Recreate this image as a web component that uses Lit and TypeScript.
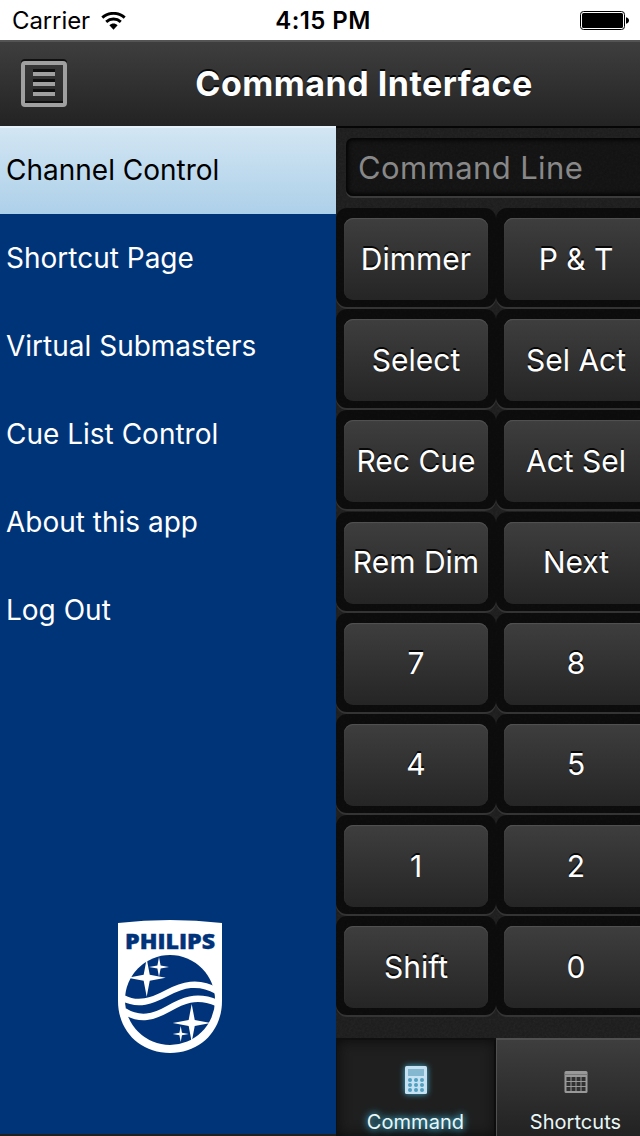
import { LitElement, html, svg, css } from 'lit';
import { customElement, property } from 'lit/decorators.js';
import { classMap } from 'lit/directives/class-map.js';

@customElement('status-bar')
export class StatusBar extends LitElement {
  static styles = css`
    :host {
      display: grid;
      grid-template-columns: 1fr auto 1fr;
      align-items: center;
      height: 40px;
      padding: 1px 11px 0 12px;
      box-sizing: border-box;
      background: #fff;
      color: #000;
      font-size: 24px;
    }

    .carrier {
      display: flex;
      align-items: center;
      gap: 11px;
      letter-spacing: -0.1px;
    }

    .time {
      padding-left: 5px;
      font-weight: 600;
      letter-spacing: 0.4px;
    }

    .battery {
      justify-self: end;
    }

    svg {
      display: block;
    }
  `;

  render() {
    return html`
      <div class="carrier">
        <span>Carrier</span>
        <svg width="25" height="18" viewBox="0 0 25 18">
          <g fill="none" stroke="#000" stroke-width="2.9">
            <path d="M1.3 5.6C7.6 -.1 17.4 -.1 23.7 5.6" />
            <path d="M5.2 9.9C9.5 6.1 15.5 6.1 19.8 9.9" />
          </g>
          <path d="M8.4 13.2C10.8 10.9 14.2 10.9 16.6 13.2L12.5 17.7Z" />
        </svg>
      </div>
      <span class="time">4:15 PM</span>
      <svg class="battery" width="49" height="19" viewBox="0 0 49 19">
        <rect x=".5" y=".5" width="44" height="18" rx="3" fill="none" stroke="#000" />
        <rect x="2" y="2" width="41" height="15" rx="1.5" />
        <path d="M46 6.2C48 6.8 49 8 49 9.5S48 12.2 46 12.8Z" />
      </svg>
    `;
  }
}

@customElement('title-bar')
export class TitleBar extends LitElement {
  static styles = css`
    :host {
      display: flex;
      align-items: center;
      height: 86px;
      padding: 0 21px 2px;
      box-sizing: border-box;
      background: linear-gradient(#3e3e3e, #232323);
      border-top: 2px solid #545454;
    }

    .menu {
      display: block;
      flex: none;
    }

    .title {
      flex: 1;
      margin: 2px 0 0 42px;
      text-align: center;
      color: #fff;
      font-size: 34px;
      font-weight: 700;
      letter-spacing: 0.5px;
      line-height: 40px;
      white-space: nowrap;
      text-shadow: 0 -2px 0 #080808;
    }
  `;

  @property() title = '';

  render() {
    return html`
      <svg class="menu" width="46" height="48" viewBox="0 0 46 48">
        <g fill="none" stroke-width="4">
          <rect x="2" y="2" width="42" height="42" rx="2" stroke="#101010" />
          <rect x="2" y="4" width="42" height="42" rx="2" stroke="#a0a0a0" />
        </g>
        <path d="M12 12H34M12 22H34M12 32H34" stroke="#101010" stroke-width="4" />
        <path d="M12 15H34M12 25H34M12 35H34" stroke="#a0a0a0" stroke-width="4" />
        <path d="M4 43H42" stroke="#101010" stroke-width="2" />
      </svg>
      <h1 class="title">${this.title}</h1>
    `;
  }
}

@customElement('side-menu')
export class SideMenu extends LitElement {
  static styles = css`
    :host {
      display: flex;
      flex-direction: column;
      background: #003478;
      color: #fff;
      font-size: 28px;
      border-bottom: 2px solid #202020;
    }

    .item {
      display: flex;
      align-items: center;
      height: 88px;
      padding: 0 6px;
      box-sizing: border-box;
    }

    .selected {
      color: #000;
      background: linear-gradient(#d3e6f3, #add0e9);
      box-shadow: inset 0 2px 0 #e5f1fa;
    }

    .logo {
      align-self: center;
      margin: auto 0 79px 4px;
    }

    .brand {
      font: 800 21px 'Open Sans', sans-serif;
      letter-spacing: 0;
    }
  `;

  @property({ type: Array }) items: string[] = [];
  @property({ type: Number }) selected = 0;

  render() {
    return html`
      ${this.items.map(
        (item, i) => html`
          <div class=${classMap({ item: true, selected: i === this.selected })}>
            ${item}
          </div>
        `
      )}
      ${this._renderLogo()}
    `;
  }

  _renderLogo() {
    return html`
      <svg class="logo" width="108" height="136" viewBox="0 0 108 136">
        <path
          fill="#fff"
          d="M2 4Q54 -2 106 4V82C106 112 84 134 54 134S2 112 2 82Z"
        />
        <text
          class="brand"
          x="54"
          y="30"
          text-anchor="middle"
          textLength="90"
          lengthAdjust="spacingAndGlyphs"
          fill="#00337a"
          stroke="#00337a"
          stroke-width=".4"
        >PHILIPS</text>
        <circle cx="54" cy="81" r="45" fill="#00337a" />
        <g fill="none" stroke="#fff" stroke-width="6.5">
          <path d="M7 79C22 87 36 82 51 74S82 61 101 72" />
          <path d="M8 92C24 102 38 98 52 90S80 75 101 84" />
        </g>
        <g fill="#fff">
          ${this._star(30.7, 58.7, 19)} ${this._star(43, 48, 10)}
          ${this._star(75.7, 104, 19)} ${this._star(64.7, 115, 8)}
        </g>
      </svg>
    `;
  }

  // four-pointed star with concave sides
  _star(x: number, y: number, r: number) {
    const k = r * 0.16;
    return svg`<path d="M${x} ${y - r}L${x + k} ${y - k}L${x + r} ${y}L${x + k} ${y + k}L${x} ${y + r}L${x - k} ${y + k}L${x - r} ${y}L${x - k} ${y - k}Z" />`;
  }
}

@customElement('key-pad')
export class KeyPad extends LitElement {
  static styles = css`
    :host {
      display: grid;
      grid-template-columns: 160px 160px;
      grid-auto-rows: 101.2px;
    }

    .well {
      display: flex;
      height: 99px;
      padding: 10px 8px 7px;
      box-sizing: border-box;
      border-radius: 11px;
      background: rgba(0, 0, 0, 0.6);
      box-shadow: 0 2px 0 #343434;
    }

    .key {
      flex: 1;
      display: flex;
      align-items: center;
      justify-content: center;
      padding: 0 0 1px;
      border-radius: 9px;
      background: linear-gradient(#3e3e3e, #252525);
      box-shadow: inset 0 1px 1px #535353;
      color: #fff;
      font-size: 30px;
      letter-spacing: 0;
      white-space: nowrap;
      text-shadow: 0 -2px 0 #080808;
    }
  `;

  @property({ type: Array }) keys: string[] = [];

  render() {
    return this.keys.map(
      key => html`<div class="well"><div class="key">${key}</div></div>`
    );
  }
}

@customElement('tab-bar')
export class TabBar extends LitElement {
  static styles = css`
    :host {
      display: grid;
      grid-template-columns: 160px 160px;
      height: 98px;
    }

    .tab {
      display: flex;
      flex-direction: column;
      align-items: center;
      justify-content: space-between;
      padding: 25px 2px 2px 0;
      box-sizing: border-box;
      background: linear-gradient(#3e3e3e, #222);
      border-top: 2px solid #505050;
      border-left: 1px solid #505050;
      color: #e9f7f7;
      font-size: 20px;
      line-height: 24px;
      letter-spacing: 0.05px;
    }

    .active {
      background: #1f1f1f;
      border-color: #101010;
      box-shadow: inset 0 0 14px #0b0b0b, inset -2px 0 0 #111;
      text-shadow: 0 0 6px #42b4d8, 0 0 10px #2e90b0;
    }

    .active svg {
      filter: drop-shadow(0 0 3px #3fb0d5);
    }

    svg {
      display: block;
    }
  `;

  render() {
    return html`
      <div class="tab active">
        <svg width="24" height="30" viewBox="0 0 24 30">
          <rect x="1" y="1" width="22" height="28" rx="1.5" fill="#c5e1f2" />
          <rect x="4" y="4" width="16" height="7" fill="#83b8d0" />
          ${[15, 20, 25].map(y =>
            [6, 12, 18].map(
              x => svg`<circle cx=${x} cy=${y} r="2" fill="#529fc0" />`
            )
          )}
        </svg>
        <span>Command</span>
      </div>
      <div class="tab">
        <svg width="24" height="30" viewBox="0 0 24 30">
          <path
            fill="#999"
            d="M2 6H22Q23.5 6 23.5 7.5V26.5Q23.5 28 22 28H2Q.5 28 .5 26.5V7.5Q.5 6 2 6Z"
          />
          <path d="M.5 9.5H23.5" stroke="#777" />
          ${[12, 17, 22].map(y =>
            [2.5, 7.5, 12.5, 17.5].map(
              x => svg`<rect x=${x} y=${y} width="4" height="4" fill="#303030" />`
            )
          )}
        </svg>
        <span>Shortcuts</span>
      </div>
    `;
  }
}

@customElement('app-root')
export class AppRoot extends LitElement {
  static styles = css`
    :host {
      display: flex;
      flex-direction: column;
      width: 640px;
      height: 1136px;
      overflow: hidden;
      font-family: Inter, 'Liberation Sans', sans-serif;
    }

    .main {
      flex: 1;
      display: grid;
      grid-template-columns: 336px 304px;
      min-height: 0;
    }

    .panel {
      display: flex;
      flex-direction: column;
      overflow: hidden;
      box-sizing: border-box;
      border-top: 2px solid #060606;
      background: #1b1b1c
        url("data:image/svg+xml,%3Csvg xmlns='http://www.w3.org/2000/svg' width='120' height='120'%3E%3Cfilter id='n'%3E%3CfeTurbulence type='fractalNoise' baseFrequency='.45' numOctaves='2' stitchTiles='stitch'/%3E%3CfeColorMatrix type='saturate' values='0'/%3E%3C/filter%3E%3Crect width='120' height='120' filter='url(%23n)' opacity='.06'/%3E%3C/svg%3E");
    }

    .command-line {
      flex: none;
      display: flex;
      align-items: center;
      width: 400px;
      height: 58px;
      margin: 10px 0 12px 10px;
      padding: 1px 12px 0;
      box-sizing: border-box;
      border-radius: 7px;
      background: rgba(0, 0, 0, 0.35);
      box-shadow: inset 0 0 4px 2px #030303, 0 2px 0 #3b3b3b;
      color: #888;
      font-size: 31px;
      letter-spacing: 0.4px;
    }

    tab-bar {
      margin-top: auto;
    }
  `;

  items = [
    'Channel Control',
    'Shortcut Page',
    'Virtual Submasters',
    'Cue List Control',
    'About this app',
    'Log Out',
  ];

  keys = [
    'Dimmer', 'P & T',
    'Select', 'Sel Act',
    'Rec Cue', 'Act Sel',
    'Rem Dim', 'Next',
    '7', '8',
    '4', '5',
    '1', '2',
    'Shift', '0',
  ];

  render() {
    return html`
      <status-bar></status-bar>
      <title-bar .title=${'Command Interface'}></title-bar>
      <div class="main">
        <side-menu .items=${this.items}></side-menu>
        <div class="panel">
          <div class="command-line">Command Line</div>
          <key-pad .keys=${this.keys}></key-pad>
          <tab-bar></tab-bar>
        </div>
      </div>
    `;
  }
}
